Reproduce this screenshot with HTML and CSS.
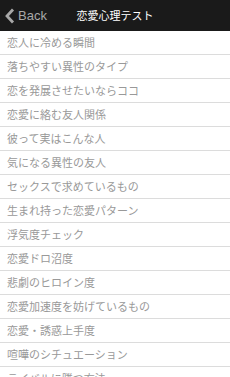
FILE: index.html
```html
<!DOCTYPE html>
<html lang="ja">
<head>
    <meta charset="UTF-8">
    <meta name="viewport" content="width=device-width, initial-scale=1.0">
    <title>恋愛心理テスト</title>
    <link rel="stylesheet" href="styles.css">
</head>
<body>
    <div class="header">
        <a class="back" href="#">
            <svg width="11" height="16" viewBox="0 0 11 16"><path d="M9 1.5 L3 8 L9 14.5" fill="none" stroke="#a8a8a8" stroke-width="2.8"/></svg>
            <span>Back</span>
        </a>
        <div class="title">恋愛心理テスト</div>
    </div>
    <ul class="list">
        <li>恋人に冷める瞬間</li>
        <li>落ちやすい異性のタイプ</li>
        <li>恋を発展させたいならココ</li>
        <li>恋愛に絡む友人関係</li>
        <li>彼って実はこんな人</li>
        <li>気になる異性の友人</li>
        <li>セックスで求めているもの</li>
        <li>生まれ持った恋愛パターン</li>
        <li>浮気度チェック</li>
        <li>恋愛ドロ沼度</li>
        <li>悲劇のヒロイン度</li>
        <li>恋愛加速度を妨げているもの</li>
        <li>恋愛・誘惑上手度</li>
        <li>喧嘩のシチュエーション</li>
        <li>ライバルに勝つ方法</li>
    </ul>
</body>
</html>
```

FILE: styles.css
```css
body {
    margin: 0;
    padding: 0;
    background: #fff;
    font-family: "Noto Sans CJK JP", "DejaVu Sans", sans-serif;
    overflow: hidden;
}
.header {
    height: 31px;
    background: #1a1a1a;
    display: flex;
    align-items: center;
    position: relative;
}
.back {
    display: flex;
    align-items: center;
    gap: 3px;
    padding-left: 4px;
    text-decoration: none;
    color: #a8a8a8;
    font-family: "Liberation Sans", Arial, sans-serif;
    font-size: 13px;
}
.title {
    position: absolute;
    left: 0;
    right: 0;
    top: 0;
    height: 31px;
    line-height: 31px;
    text-align: center;
    color: #fff;
    font-size: 11px;
    pointer-events: none;
}
.list {
    list-style: none;
    margin: 0;
    padding: 0;
}
.list li {
    height: 23px;
    line-height: 23px;
    padding-left: 7px;
    font-size: 11px;
    color: #999;
    border-bottom: 1px solid #dcdcdc;
    white-space: nowrap;
}
```
